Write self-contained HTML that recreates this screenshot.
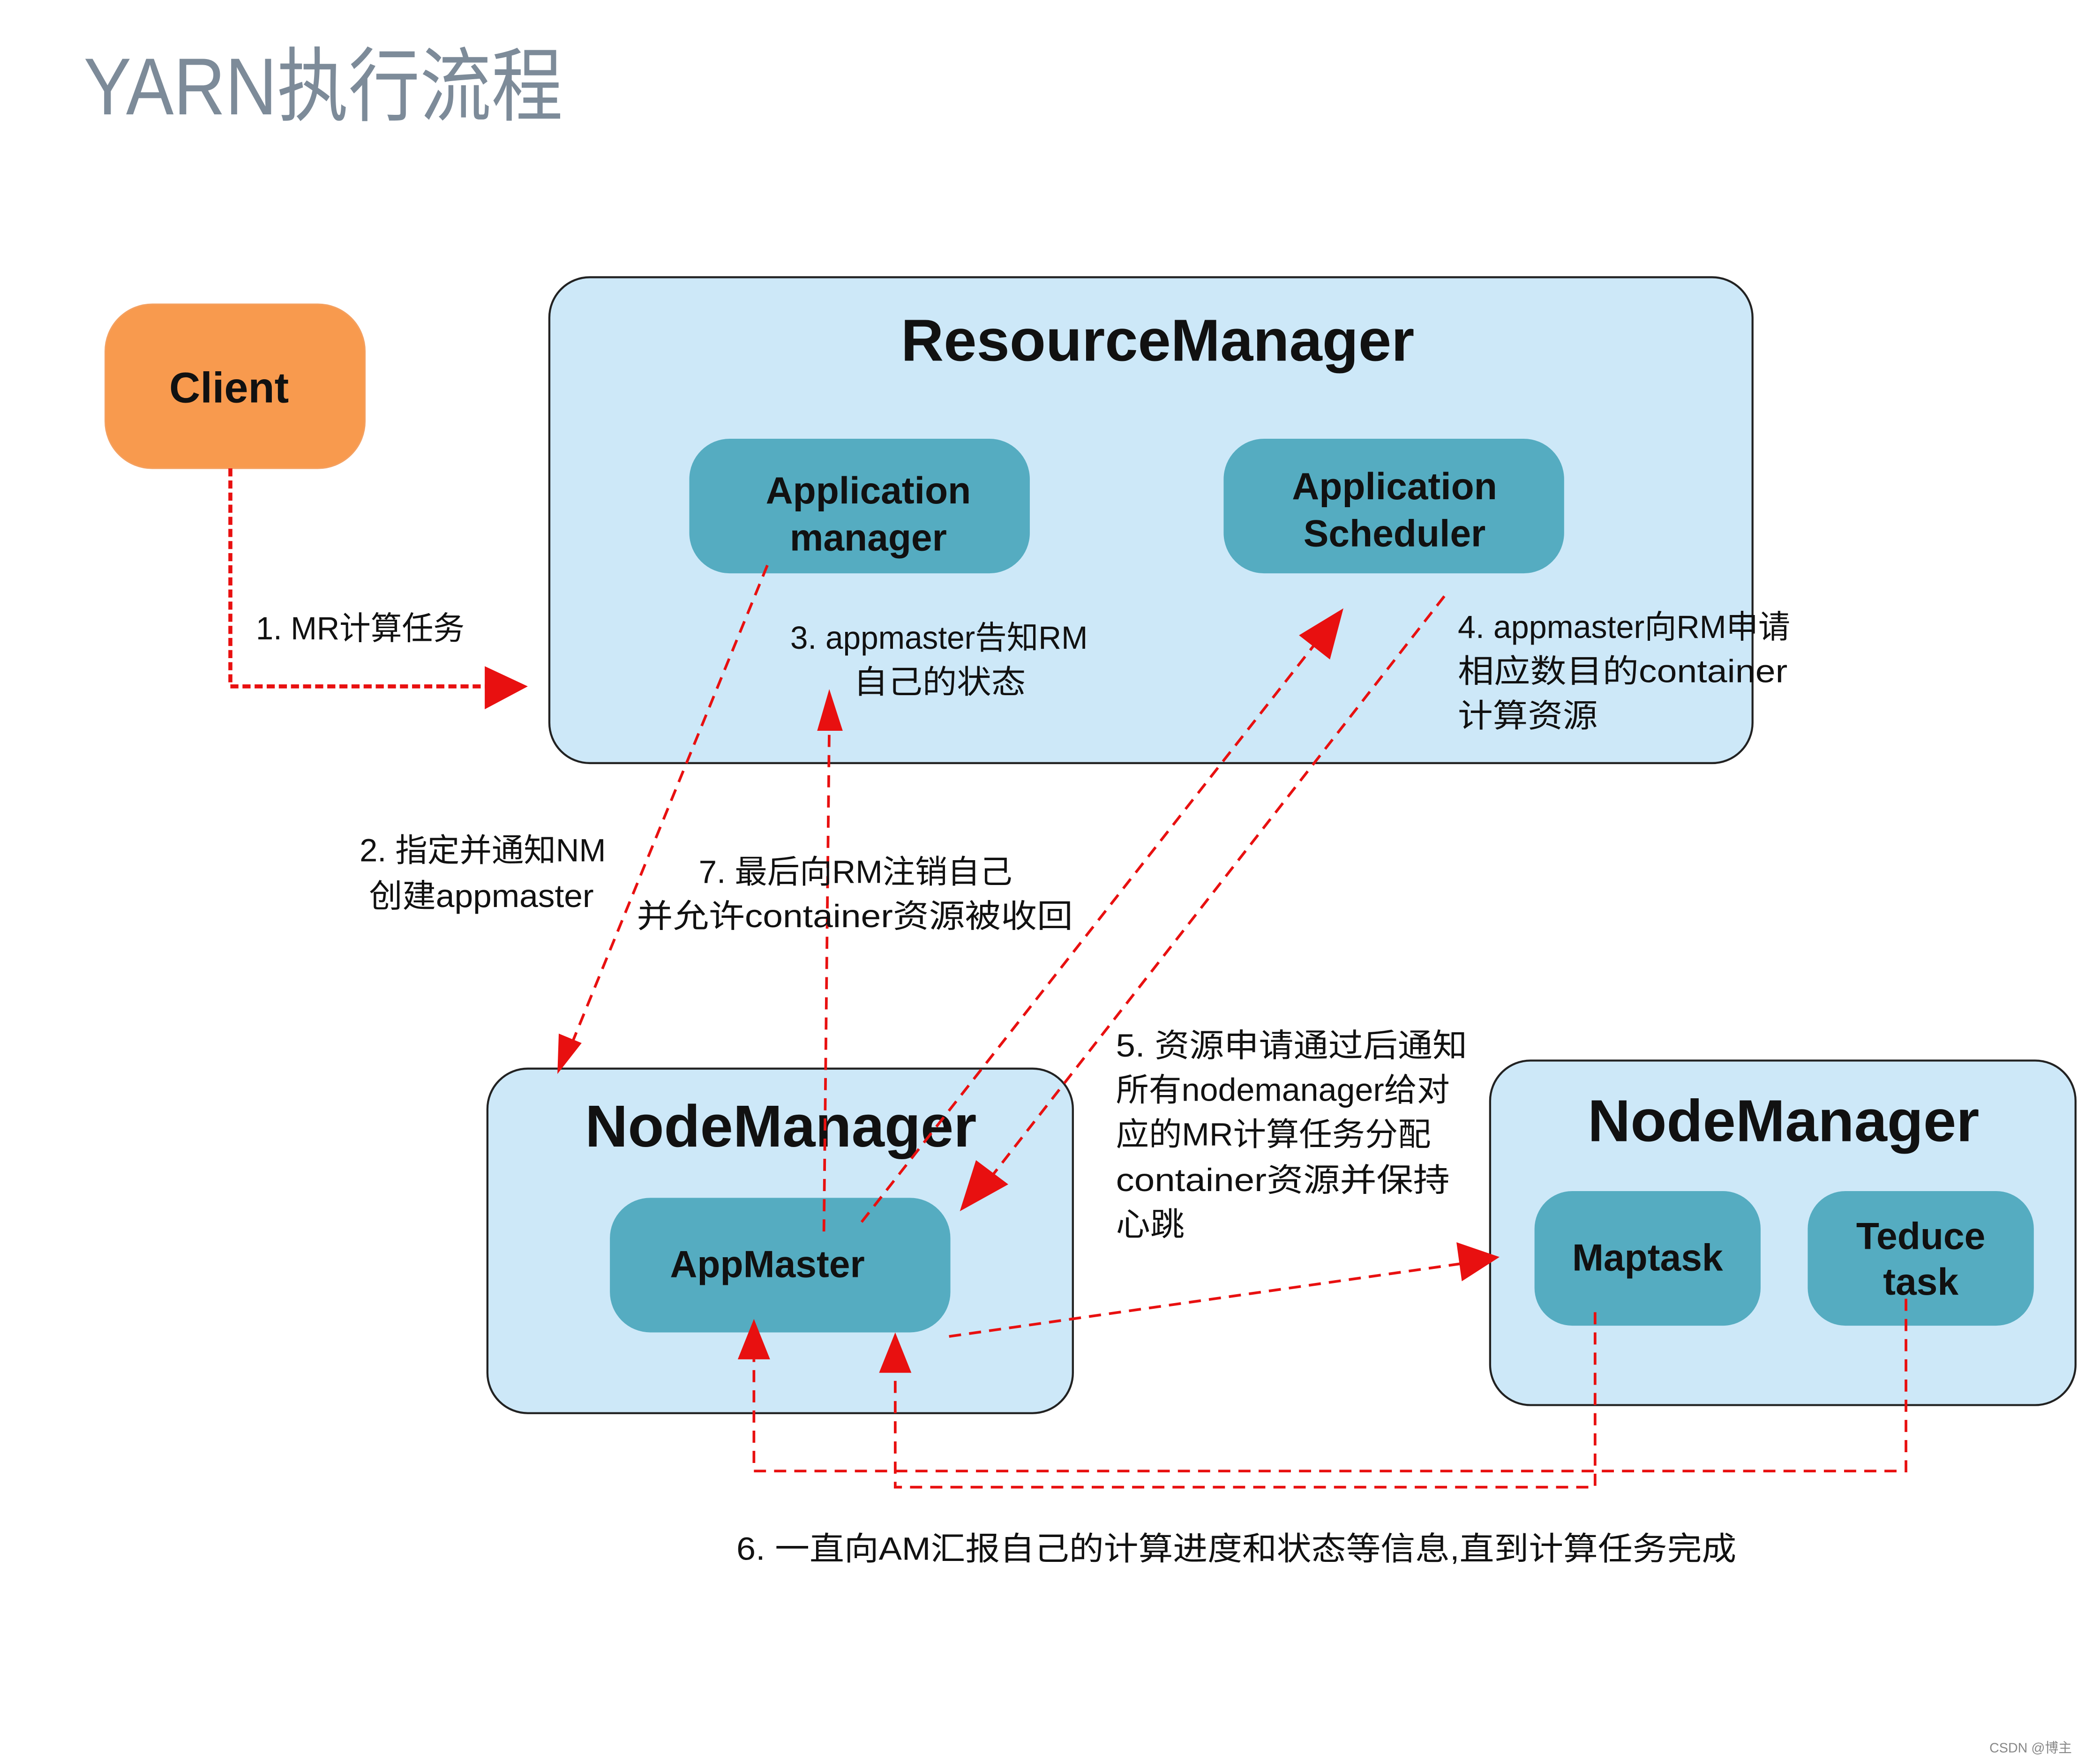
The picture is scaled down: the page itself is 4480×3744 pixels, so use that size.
<!DOCTYPE html>
<html><head><meta charset="utf-8"><style>
html,body{margin:0;padding:0;background:#fff;}
svg{display:block;width:4480px;height:3744px;}
text{font-family:"Liberation Sans","Noto Sans CJK SC",sans-serif;}
.t{font-size:24px;fill:#111;}
.b{font-weight:bold;fill:#111;}
</style></head><body>
<svg viewBox="0 0 1560 1304" xmlns="http://www.w3.org/2000/svg">
<rect width="1560" height="1304" fill="#fff"/>
<text x="62" y="85" font-size="60" fill="#7d8b99" textLength="356" lengthAdjust="spacingAndGlyphs">YARN执行流程</text>

<rect x="78" y="226" width="193" height="122" rx="35" fill="#f89a4e" stroke="#f4a060"/>
<text x="170" y="299" text-anchor="middle" font-size="32" class="b">Client</text>

<rect x="408" y="206" width="894" height="361" rx="30" fill="#cde8f8" stroke="#222" stroke-width="1.5"/>
<text x="860" y="268" text-anchor="middle" font-size="44" class="b">ResourceManager</text>
<rect x="512" y="326" width="253" height="100" rx="30" fill="#55acc1"/>
<text x="645" y="374" text-anchor="middle" font-size="28" class="b">Application</text>
<text x="645" y="409" text-anchor="middle" font-size="28" class="b">manager</text>
<rect x="909" y="326" width="253" height="100" rx="30" fill="#55acc1"/>
<text x="1036" y="371" text-anchor="middle" font-size="28" class="b">Application</text>
<text x="1036" y="406" text-anchor="middle" font-size="28" class="b">Scheduler</text>

<rect x="362" y="794" width="435" height="256" rx="30" fill="#cde8f8" stroke="#222" stroke-width="1.5"/>
<text x="580" y="852" text-anchor="middle" font-size="44" class="b">NodeManager</text>
<rect x="453" y="890" width="253" height="100" rx="30" fill="#55acc1"/>
<text x="570" y="949" text-anchor="middle" font-size="28" class="b">AppMaster</text>

<rect x="1107" y="788" width="435" height="256" rx="30" fill="#cde8f8" stroke="#222" stroke-width="1.5"/>
<text x="1325" y="848" text-anchor="middle" font-size="44" class="b">NodeManager</text>
<rect x="1140" y="885" width="168" height="100" rx="28" fill="#55acc1"/>
<text x="1224" y="944" text-anchor="middle" font-size="28" class="b">Maptask</text>
<rect x="1343" y="885" width="168" height="100" rx="28" fill="#55acc1"/>
<text x="1427" y="928" text-anchor="middle" font-size="28" class="b">Teduce</text>
<text x="1427" y="962" text-anchor="middle" font-size="28" class="b">task</text>

<g stroke="#e81010" stroke-width="2" fill="none" stroke-dasharray="9,6">
<path d="M171 348 V510 H362" stroke-width="3" stroke-dasharray="6,3"/>
<path d="M570 420 L422 782"/>
<path d="M612 915 L616 540"/>
<path d="M640 908 L982 472"/>
<path d="M1073 443 L732 880"/>
<path d="M705 993 L1085 939"/>
<path d="M1416 965 V1093 H560 V1010"/>
<path d="M1185 975 V1105 H665 V1020"/>
</g>
<g fill="#e81010">
<polygon points="360,495 392,510 360,527"/>
<polygon points="414,798 415,768 432,775"/>
<polygon points="616,512 607,543 626,543"/>
<polygon points="998,452 988,490 965,472"/>
<polygon points="713,900 725,862 749,880"/>
<polygon points="1114,934 1082,923 1086,952"/>
<polygon points="560,980 548,1010 572,1010"/>
<polygon points="665,990 653,1020 677,1020"/>
</g>

<g lengthAdjust="spacingAndGlyphs">
<text class="t" x="190" y="475" textLength="155" lengthAdjust="spacingAndGlyphs">1. MR计算任务</text>
<text class="t" x="587" y="482" textLength="221" lengthAdjust="spacingAndGlyphs">3. appmaster告知RM</text>
<text class="t" x="634" y="515" textLength="128" lengthAdjust="spacingAndGlyphs">自己的状态</text>
<text class="t" x="1083" y="474" textLength="247" lengthAdjust="spacingAndGlyphs">4. appmaster向RM申请</text>
<text class="t" x="1083" y="507" textLength="245" lengthAdjust="spacingAndGlyphs">相应数目的container</text>
<text class="t" x="1083" y="540" textLength="104" lengthAdjust="spacingAndGlyphs">计算资源</text>
<text class="t" x="267" y="640" textLength="183" lengthAdjust="spacingAndGlyphs">2. 指定并通知NM</text>
<text class="t" x="274" y="674" textLength="167" lengthAdjust="spacingAndGlyphs">创建appmaster</text>
<text class="t" x="519" y="656" textLength="233" lengthAdjust="spacingAndGlyphs">7. 最后向RM注销自己</text>
<text class="t" x="473" y="689" textLength="324" lengthAdjust="spacingAndGlyphs">并允许container资源被收回</text>
<text class="t" x="829" y="785" textLength="261" lengthAdjust="spacingAndGlyphs">5. 资源申请通过后通知</text>
<text class="t" x="829" y="818" textLength="248" lengthAdjust="spacingAndGlyphs">所有nodemanager给对</text>
<text class="t" x="829" y="851" textLength="234" lengthAdjust="spacingAndGlyphs">应的MR计算任务分配</text>
<text class="t" x="829" y="885" textLength="248" lengthAdjust="spacingAndGlyphs">container资源并保持</text>
<text class="t" x="829" y="918" textLength="51" lengthAdjust="spacingAndGlyphs">心跳</text>
<text class="t" x="547" y="1159" textLength="743" lengthAdjust="spacingAndGlyphs">6. 一直向AM汇报自己的计算进度和状态等信息,直到计算任务完成</text>
</g>
<text x="1478" y="1302" font-size="10" fill="#888">CSDN @博主</text>
</svg>
</body></html>
